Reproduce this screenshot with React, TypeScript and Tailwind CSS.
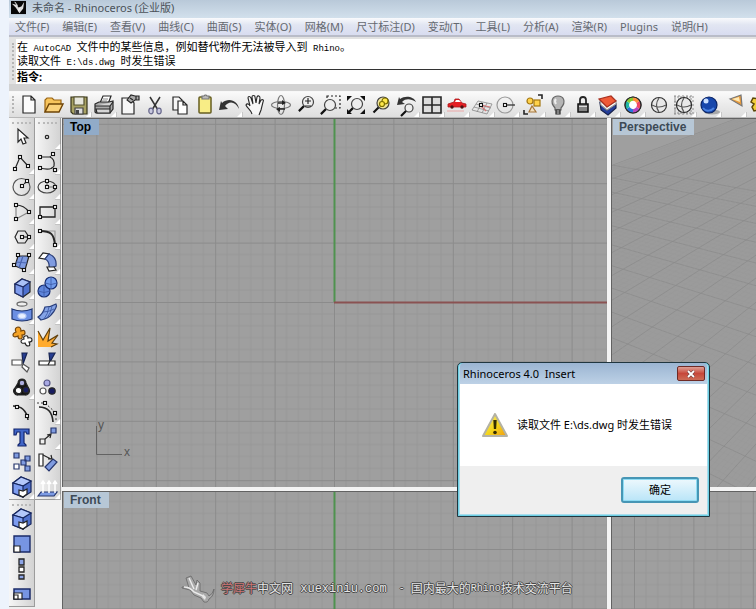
import React from "react";

const INK = "#262626";
const BLUE = "#7f9be0";

function Icon({ children, fly = false }: { children: React.ReactNode; fly?: boolean }) {
  return (
    <svg viewBox="0 0 26 26" className="h-[26px] w-[26px] shrink-0" fill="none" stroke={INK} strokeWidth="1.2" aria-hidden="true">
      {children}
      {fly && <path d="M25 20v5h-5z" fill="#fff" stroke="none" />}
      {fly && <path d="M25.5 20v5.5H20" stroke="#b5b5b5" strokeWidth="0.6" />}
    </svg>
  );
}

function Dots({ at }: { at: [number, number][] }) {
  return (
    <>
      {at.map(([x, y]) => (
        <rect key={`${x}-${y}`} x={x - 1.5} y={y - 1.5} width="3" height="3" fill="#fff" stroke="#111" strokeWidth="1.1" />
      ))}
    </>
  );
}

const Lens = ({ x, y, r, fill = "#eee" }: { x: number; y: number; r: number; fill?: string }) => (
  <>
    <circle cx={x} cy={y} r={r} fill={fill} stroke="#444" />
    <path d={`M${x - r * 0.75} ${y + r * 0.75}L${x - r * 0.75 - 5} ${y + r * 0.75 + 5}`} stroke="#111" strokeWidth="2.2" />
  </>
);

const Cube = () => (
  <>
    <path d="M6 10l7-5 8 3v10l-7 5-8-4z" fill="#4d70cf" />
    <path d="M6 10l7-5 8 3-7 5z" fill="#a9c0f7" stroke="#1e2c66" />
    <path d="M6 10l8 3v10l-8-4z" fill="#7f9cec" stroke="#1e2c66" />
  </>
);

const CubeView = () => (
  <>
    <path d="M4 9l8-6 10 4v11l-8 5-10-4z" fill="#4f70cc" stroke="#16265e" />
    <path d="M4 9l8-6 10 4-8 5z" fill="#b4c8fa" stroke="#16265e" />
    <path d="M4 9l10 3v11L4 19z" fill="#7d9cf0" stroke="#16265e" />
    <path d="M10 16l4 1 4-2v5l-4 3-4-2z" fill="#fff" stroke="#222" />
  </>
);

type Tool = [string, React.ReactNode, boolean?];

const mainTools: Tool[] = [
  ["新建", <path d="M7 4h8l4 4v13H7zM15 4v4h4" fill="#fcfcfc" />],
  ["打开", <><path d="M4 20V8l2-2h5l2 2h7v4" fill="#f7c45c" stroke="#9a6412" /><path d="M4 20l4-8h14l-4 8z" fill="#fbd27b" stroke="#6e4407" strokeWidth="1.4" /></>],
  ["保存", <><path d="M5 5h16v17H7l-2-2z" fill="#a8a264" stroke="#35331a" /><path d="M8 5h10v8H8z" fill="#e6e6dc" stroke="#55522f" /><path d="M9 16h8v6H9z" fill="#ddd" stroke="#444" /><path d="M10 18h3v4h-3z" fill="#444" stroke="none" /></>, true],
  ["打印", <><path d="M9 11l3-7h8l-3 8" fill="#fff" /><path d="M4 12l4-2h10l4-1v8l-3 4H5l-1-1z" fill="#aaa" /><path d="M4 14h15l3-4M5 17h14v4H6zM19 14v7" fill="#d5d5d5" /><path d="M12 7h5M11 9h5" stroke="#888" /></>, true],
  ["属性", <><path d="M6 6h8l4 5v11H6z" fill="#f6f6f6" /><path d="M11 8l4-5 4 1h4v4h-4l-4 3z" fill="#aaa" /><path d="M20 4v4M14 6l3 2" /></>],
  ["剪切", <><path d="M8 5l8 13M18 5l-8 13" strokeWidth="1.5" stroke="#333" /><ellipse cx="9" cy="19" rx="2.2" ry="2.8" fill="#c8c8df" stroke="#66668a" /><ellipse cx="17" cy="19" rx="2.2" ry="2.8" fill="#c8c8df" stroke="#66668a" /></>],
  ["复制", <><path d="M6 5h6l3 3v10H6z" fill="#f6f6f6" /><path d="M11 9h5l4 4v9h-9zM16 9v4h4" fill="#fff" /></>],
  ["粘贴", <><rect x="7" y="5" width="12" height="16" rx="1" fill="#f8ed86" stroke="#655d21" strokeWidth="1.5" /><path d="M10 7V4h2l1-1h1l1 1h2v3z" fill="#bbb" stroke="#777" /></>],
  ["撤销", <path d="M8 14c4-5 10-5 14 3-1-8-10-12-17-6l-1-2-2 9 9-1z" fill="#333" stroke="none" />, true],
  ["平移", <path d="M10 22c-1-4-5-6-6-9 1-2 3-1 4 1L6 6c0-2 2-2 3 0l2 6-1-7c0-2 3-2 3 0l1 6 1-6c1-2 3-1 3 1l-1 6 2-4c2-1 3 0 2 2l-2 8-2 5" fill="#f7f7f7" strokeWidth="1.1" />],
  ["旋转视图", <><ellipse cx="13" cy="13" rx="9.500" ry="3.500" stroke="#777" /><ellipse cx="13" cy="13" rx="3.500" ry="9.500" stroke="#777" /><path d="M14 8l4 3-4 2zM12 15l-4 2 4 3z" fill="#222" stroke="none" /><path d="M10 11h5M11 17h6" strokeWidth="1.700" /></>],
  ["缩放", <><Lens x={15} y={10} r={5.5} /><path d="M12 9h6M15 6v6M12 14h6" /></>],
  ["框选缩放", <><path d="M9 4h13v12H9z" strokeDasharray="2 2" /><Lens x={12} y={13} r={5.5} /></>],
  ["缩放至范围", <><Lens x={14} y={12} r={5.5} /><path d="M4 4h5L4 9zM22 4h-5l5 5zM4 22h5l-5-5zM22 22h-5l5-5z" fill="#111" stroke="none" /></>],
  ["缩放选取", <><Lens x={15} y={11} r={6} fill="#f2e698" /><circle cx="17" cy="9" r="3" fill="#ffe94c" stroke="#7c6e00" /><circle cx="14" cy="12" r="2.500" fill="#ffe94c" stroke="#7c6e00" /></>],
  ["上一视图", <><Lens x={15} y={16} r={4} /><path d="M8 10c4-4 9-3 14 0C20 5 12 3 6 7L5 5 3 13l8-1z" fill="#333" stroke="none" /></>, true],
  ["四视图", <path d="M4 5h18v16H4zM13 5v16M4 13h18" strokeWidth="1.6" fill="#ddd" />, true],
  ["着色车", <><path d="M4 15v-3l6-2 1-3h4l3 4 4 1v3z" fill="#e51f24" stroke="#a9191c" strokeWidth="0.8" /><path d="M11 10l1-2h3l2 2z" fill="#fff" stroke="none" /><circle cx="8" cy="15" r="1.700" fill="#4c1111" stroke="none" /><circle cx="18" cy="15" r="1.700" fill="#4c1111" stroke="none" /><path d="M3 19h17" stroke="#e9b1b1" /></>, true],
  ["工作平面", <><path d="M3 18l6-9 14 3-5 10zM5 15l15 4M7 12l15 4M13 10l-5 10M18 11l-5 10" stroke="#888" strokeWidth="0.8" /><path d="M12 13l9 2M12 14l5 5" stroke="#d67676" /><Dots at={[[12, 13]]} /></>, true],
  ["物件锁点", <><circle cx="11" cy="13" r="8" stroke="#999" /><path d="M12 13h9" /><Dots at={[[11, 13]]} /></>, true],
  ["选取", <><path d="M18 3h4v4M8 22H4v-4" strokeWidth="1.6" /><circle cx="10" cy="9" r="3" fill="#ffd24b" stroke="#a47711" /><rect x="14" y="8" width="6" height="6" fill="#ffd24b" stroke="#a47711" /><path d="M12 14l4 6H9z" fill="#f3dfbd" stroke="#a6763a" /></>, true],
  ["隐藏", <><path d="M10 16C4 9 8 4 13 4s9 5 3 12v2h-6z" fill="#b5b5b5" stroke="#666" /><path d="M11 18h4v4h-4zM11 20h4" fill="#ddd" /><path d="M11 7q-2 2 0 5" stroke="#eee" strokeWidth="2" /></>, true],
  ["锁定", <><path d="M10 12V8c0-4 6-4 6 0v4" strokeWidth="1.8" /><rect x="8" y="12" width="10" height="8" fill="#858585" stroke="#111" strokeWidth="1.5" /><path d="M9 14h8v1H9z" fill="#ddd" stroke="none" /></>, true],
  ["图层", <><path d="M5 11l7 7 9-6v4l-8 7-7-5z" fill="#243e9a" stroke="#17214a" /><path d="M5 8l7 7 9-6v3l-9 6-6-5z" fill="#fff" stroke="#999" /><path d="M4 7l12-3 5 5-9 6z" fill="#f05a37" stroke="#a9301f" /></>, true],
  ["材质", <><circle cx="13" cy="13" r="8" fill="#fff" stroke="#333" /><g strokeWidth="3.600"><path d="M13 7a6 6 0 0 1 5 3" stroke="#ff913d" /><path d="M18 10a6 6 0 0 1 0 6" stroke="#f14664" /><path d="M18 16a6 6 0 0 1-5 3" stroke="#b447c1" /><path d="M13 19a6 6 0 0 1-5-3" stroke="#2874da" /><path d="M8 16a6 6 0 0 1 0-6" stroke="#1fb7a5" /><path d="M8 10a6 6 0 0 1 5-3" stroke="#8acc31" /></g><circle cx="13" cy="13" r="8" /></>, true],
  ["着色", <><circle cx="13" cy="13" r="7.500" fill="#e8e8e8" stroke="#333" /><path d="M13 6q-5 7 0 14M6 13q7 4 14 0" stroke="#555" /></>],
  ["渲染网格", <><path d="M4 3v20M8 3v20M12 3v20M16 3v20M20 3v20M3 5h20M3 9h20M3 13h20M3 17h20M3 21h20" stroke="#777" strokeWidth="0.8" strokeDasharray="2 1" /><circle cx="13" cy="13" r="7.500" fill="#e8e8e8" /><path d="M13 6q-5 7 0 14M6 13q7 4 14 0" stroke="#555" /></>, true],
  ["渲染", <><ellipse cx="16" cy="20" rx="8" ry="2.500" fill="#a9a9a9" stroke="none" /><circle cx="13" cy="13" r="8" fill="#1747ac" stroke="#0b2464" /><circle cx="10" cy="9" r="2.500" fill="#cbe0ff" stroke="none" /><path d="M7 16c3 4 8 3 11 0" stroke="#4b82e2" strokeWidth="2" /></>, true],
  ["灯光", <><path d="M9 7l11-4 1 11z" fill="#e89a3c" stroke="#777" /><path d="M11 7l7-2 1 5z" fill="#ffe9b3" stroke="none" /></>, true],
  ["选项", <path d="M11 4h4v3l4-1 2 4-3 2 3 3-2 4-4-1v3h-4v-3l-4 1-2-4 2-3-3-2 2-4 5 1z" fill="#f1cd39" stroke="#5b4606" strokeWidth="1.5" />],
];

const leftTools: Tool[] = [
  ["选取物件", <path d="M9 5v13l3-3 2 5 3-1-2-5h4z" fill="#fff" />],
  ["多重直线", <><path d="M6 20L11 8l8 9" /><Dots at={[[6, 20], [11, 8], [19, 17]]} /></>, true],
  ["圆", <><circle cx="12.500" cy="13" r="8.500" stroke="#555" /><path d="M13 12l5-5" strokeDasharray="2 1" /><Dots at={[[13, 12], [18, 7]]} /></>, true],
  ["圆弧", <><path d="M7 6q8 0 13 7" /><path d="M20 13L7 20V7" stroke="#888" /><Dots at={[[7, 6], [20, 13], [7, 20]]} /></>, true],
  ["多边形", <><path d="M6 13l3-6h7l4 6-4 6H9z" /><path d="M13 13h7" /><Dots at={[[13, 13], [20, 13]]} /></>, true],
  ["曲面", <><path d="M6 17L9 7h11l-4 14z" fill={BLUE} /><path d="M7 13l11 1M14 7l-4 12" stroke="#4863ae" /><Dots at={[[9, 6], [20, 6], [5, 16], [15, 21]]} /></>, true],
  ["立方体", <Cube />, true],
  ["圆管", <><ellipse cx="13" cy="5" rx="5" ry="2.200" fill="#eee" stroke="#666" /><path d="M3 10q10 4 20 0v10q-10 4-20 0z" fill="#6b8fe3" stroke="#1c326c" /><ellipse cx="13" cy="17" rx="4" ry="2.500" fill="#eaf1ff" stroke="#b9ccf5" /></>, true],
  ["布尔运算", <><path d="M9 3q3 0 3 4 4-2 4 2 0 2-3 2 1 4-2 4-2 0-2-3-5 2-5-1 0-2 3-3-2-4 2-5z" fill="#f5a326" stroke="#76460a" /><path d="M16 12q3-1 3 2 4-1 4 2 0 2-3 2 2 4-1 4-2 0-3-3-4 1-4-2 0-1 3-2-1-2 1-3z" fill="#fff" /></>],
  ["修剪", <><path d="M13 4h5l-4 11z" fill="#263d91" stroke="#162453" /><path d="M3 11h10v5H3z" fill="#fff" stroke="#555" /><path d="M14 15l6 4-2 4-5-5z" fill="#fff" stroke="#555" /></>],
  ["群组", <><path d="M13 5a4 4 0 0 1 4 4l3 6a4 4 0 0 1-4 6H9a4 4 0 0 1-3-7l3-5a4 4 0 0 1 4-4z" fill="#111" /><circle cx="13" cy="9" r="2.800" fill="#acaddf" /><circle cx="9.500" cy="16.500" r="3.200" fill="#fff" /><circle cx="17" cy="16" r="3" fill="#171c60" /></>, true],
  ["编辑点", <><path d="M4 7q13 0 15 14" strokeWidth="1.6" /><Dots at={[[8, 8], [18, 17]]} /></>],
  ["文字", <path d="M5 5h15v5h-2l-1-2h-2v11l2 2v1H9v-1l2-2V8H8l-1 3H5z" fill="#4166c8" stroke="#14266d" />],
  ["阵列", <g fill={BLUE} stroke="#26366d"><path d="M5 4h5v5H5zM16 7h5v5h-5zM12 11h5v5h-5zM16 17h5v5h-5z" /><path d="M5 15h5v5H5z" fill="#fff" /></g>],
  ["视图", <CubeView />, true],
];

const rightTools: Tool[] = [
  ["点", <circle cx="12" cy="13" r="1.700" />, true],
  ["控制点曲线", <><path d="M5 8h10q5 2 4 9-3 5-14 2" /><path d="M15 8l3-3M16 19l5 2" strokeDasharray="1 1" /><Dots at={[[5, 8], [18, 5], [5, 19], [20, 21]]} /></>, true],
  ["椭圆", <><ellipse cx="12" cy="13" rx="9" ry="6" stroke="#444" /><path d="M12 13V7M12 13h9" stroke="#666" /><Dots at={[[12, 7], [12, 13], [20, 13]]} /></>, true],
  ["矩形", <><path d="M5 8h15v10H5z" strokeWidth="1.3" /><Dots at={[[20, 8], [5, 18]]} /></>, true],
  ["圆角", <><path d="M5 7h15v14" stroke="#999" /><path d="M5 7c11 0 14 3 15 14" strokeWidth="2" /><Dots at={[[5, 7], [20, 21]]} /></>, true],
  ["曲面圆角", <><path d="M4 9l4-5 6 1-4 5z" fill="#fff" /><path d="M14 5q8 3 7 12l-7 3q1-8-4-10z" fill={BLUE} stroke="#293e7a" /><path d="M12 18l7 0 2 3-7 1z" fill="#fff" /></>, true],
  ["球体", <><circle cx="9" cy="17" r="6" fill="#5f86db" stroke="#172e71" /><circle cx="16" cy="9" r="6" fill="#719cec" stroke="#172e71" /><path d="M16 3v12M10 9q6 3 12 0M9 11v12M3 17q6 3 12 0" stroke="#3b58a5" strokeWidth="0.8" /></>, true],
  ["嵌面", <><path d="M3 18q5-3 7-10 6 0 11-3 2 3-5 11-2 3-10 5z" fill="#84a3e6" stroke="#293e7a" /><path d="M8 13q6 0 11-3M14 8q-1 7-5 12M17 7q-1 7-5 12" stroke="#38549f" strokeWidth="0.8" /></>, true],
  ["炸开", <><path d="M3 23V7l5 9 7-12-2 13 10-6-6 8 5 1-6 3z" fill="#ffab2e" stroke="none" /><path d="M3 7l5 9 7-12-2 13 10-6-6 8 5 1-6 3" stroke="#5f400f" /></>],
  ["分割", <><path d="M14 4h6l-5 9z" fill="#263d91" stroke="#162453" /><path d="M4 12h16v4H4z" fill="#fff" /><path d="M15 12l-2 4" /></>],
  ["解散群组", <><circle cx="12" cy="9" r="3" fill="#a8a9e3" stroke="#555685" /><circle cx="8" cy="17" r="3" fill="#fff" stroke="#555" /><circle cx="17" cy="17" r="3.200" fill="#171c60" /></>],
  ["控制点", <><path d="M4 8q13 0 14 15" strokeWidth="1.7" /><path d="M2 4h8l11 10v8" strokeDasharray="2 2" strokeWidth="0.9" /><Dots at={[[10, 4], [20, 14]]} /></>, true],
  ["移动", <><path d="M5 15h5v5H5z" fill="#eee" /><path d="M16 4h5v5h-5z" fill={BLUE} stroke="#26366d" /><path d="M10 15l6-5M12 11l4-1-1 4" /></>, true],
  ["旋转", <><path d="M4 5h4v12H4z" fill="#fff" /><path d="M10 18l8-8 4 3-8 9z" fill={BLUE} stroke="#26366d" /><path d="M8 6l8 4M13 10h4l-1-4" /></>],
  ["挤出", <><path d="M3 22l3-4h16l-3 4z" fill="#7c9be5" stroke="#26366d" /><path d="M8 19V8M6 10l2-3 2 3M14 19V8M12 10l2-3 2 3M20 19V8M18 10l2-3 2 3" stroke="#fff" strokeWidth="1.500" /></>, true],
];

const viewTools: Tool[] = [
  ["立体视图", <CubeView />],
  ["最大化", <><path d="M5 5h16v16H5z" fill="#7795e3" stroke="#1b2b68" strokeWidth="1.400" /><path d="M5 15h6v6H5z" fill="#fff" /></>],
  ["垂直排列", <g strokeWidth="1.300"><path d="M10 3h5v6h-5z" fill="#8ca4e7" /><path d="M10 11h5v5h-5z" fill="#fff" /><path d="M10 19h5v4h-5z" fill="#8ca4e7" /></g>],
  ["水平排列", <><path d="M5 8h16v10H5z" fill="#7795e3" stroke="#1b2b68" strokeWidth="1.500" /><path d="M5 12h8v6H5z" fill="#fff" /><path d="M5 14h4v4H5z" fill="#fff" /></>],
];

const menus = ["文件(F)", "编辑(E)", "查看(V)", "曲线(C)", "曲面(S)", "实体(O)", "网格(M)", "尺寸标注(D)", "变动(T)", "工具(L)", "分析(A)", "渲染(R)", "Plugins", "说明(H)"];

function ToolColumn({ tools }: { tools: Tool[] }) {
  return (
    <div className="flex w-[26px] flex-col border-r border-b border-[#9c9c9c] bg-linear-to-r from-[#f6f6f6] to-[#d3d3d3] pt-1">
      <div className="mx-[3px] h-[2px] border-t-2 border-dotted border-[#b9b9b9]" />
      {tools.map(([name, art, fly]) => (
        <button key={name} aria-label={name} className="flex h-[25px] w-full items-center justify-center">
          <Icon fly={fly}>{art}</Icon>
        </button>
      ))}
    </div>
  );
}

const CELL = 59.4;

function PlanGrid({ id, x, y, xAxis }: { id: string; x: number; y: number; xAxis?: boolean }) {
  const minor = [1, 2, 3, 4].map((n) => (n * CELL) / 5);
  return (
    <svg className="absolute inset-0 h-full w-full" aria-hidden="true">
      <defs>
        <pattern id={id} x={x} y={y} width={CELL} height={CELL} patternUnits="userSpaceOnUse">
          {minor.map((m) => (
            <path key={m} d={`M${m} 0V60M0 ${m}H60`} stroke="#959595" strokeWidth="0.8" />
          ))}
          <path d="M0.500 0V60M0 0.500H60" stroke="#8b8b8b" />
        </pattern>
      </defs>
      <rect width="100%" height="100%" fill={`url(#${id})`} />
      {id !== "right-grid" && <path d={`M${x + 0.5} 0V${xAxis ? y : 900}`} stroke="#4f924f" strokeWidth="2" />}
      {xAxis && <path d={`M${x} ${y + 0.5}H2000`} stroke="#8a5252" strokeWidth="2" />}
    </svg>
  );
}

function PerspectiveGrid() {
  const lines: React.ReactNode[] = [];
  for (let i = 0; i < 150; i++) {
    const t = i / 5;
    const a = 46 + 12 * t + 0.8 * t * t;
    const b = 46 + 13 * t + 0.9 * t * t;
    const major = i % 5 === 0;
    const stroke = major ? "#8b8b8b" : "#999";
    const w = major ? 0.8 : 0.5;
    lines.push(<line key={`a${i}`} x1="-800" y1="-100" x2="800" y2={2 * a + 100} stroke={stroke} strokeWidth={w} />);
    lines.push(<line key={`b${i}`} x1="0" y1={b} x2="600" y2="-180" stroke={stroke} strokeWidth={w} />);
  }
  return (
    <svg className="absolute inset-0 h-full w-full" aria-hidden="true">
      <defs>
        <clipPath id="ground">
          <path d="M0 46L122 0H900V900H0z" />
        </clipPath>
      </defs>
      <path d="M0 46L122 0H900V900H0z" fill="#9b9b9b" />
      <g clipPath="url(#ground)">{lines}</g>
    </svg>
  );
}

function Viewport({ title, active, children }: { title?: string; active?: boolean; children: React.ReactNode }) {
  return (
    <section className="relative overflow-hidden border-t border-l border-[#626262] bg-[#9f9f9f]">
      {children}
      {title && (
        <h2 className={`relative ml-px w-fit pr-2 pl-1.5 text-xs leading-4 font-bold ${active ? "bg-[#91abc8] text-black" : "bg-[#b7c7d6] text-[#3d4a56]"}`}>
          {title}
        </h2>
      )}
    </section>
  );
}

const Mono = ({ children }: { children: React.ReactNode }) => (
  <span className="font-['Liberation_Mono',monospace] text-[9px] whitespace-pre">{children}</span>
);

function ErrorDialog() {
  return (
    <div role="dialog" aria-labelledby="dialog-title" className="absolute top-[362px] left-[457px] w-[253px] rounded-t-[5px] border border-[#20363f] bg-[#a9dcec] px-0.5 pb-0.5 text-black shadow-[inset_0_0_0_1px_#6dd0e4]">
      <div className="flex h-[21px] items-center justify-between rounded-t bg-linear-to-b from-[#9bb5d2] to-[#bdd1e6] pl-[3px]">
        <h1 id="dialog-title" className="text-[11px] leading-5 whitespace-pre">Rhinoceros 4.0  Insert</h1>
        <button aria-label="关闭" className="mr-0.5 flex h-[15px] w-7 items-center justify-center rounded-[2px] border border-[#6f2a25] bg-linear-to-b from-[#dd9f96] via-[#c7473a] via-50% to-[#cc6b55]">
          <svg viewBox="0 0 10 8" className="h-2 w-2.5" aria-hidden="true">
            <path d="M2 1l6 6M8 1L2 7" stroke="#693c3c" strokeWidth="3" />
            <path d="M2 1l6 6M8 1L2 7" stroke="#fff" strokeWidth="1.800" />
          </svg>
        </button>
      </div>
      <div className="flex h-[82px] items-center gap-2 bg-white pl-[21px]">
        <svg viewBox="0 0 28 26" className="h-[26px] w-7" aria-hidden="true">
          <defs>
            <linearGradient id="warning" x2="1" y2="1">
              <stop stopColor="#fff37a" />
              <stop offset=".55" stopColor="#f4d51b" />
              <stop offset="1" stopColor="#f09b12" />
            </linearGradient>
          </defs>
          <path d="M14 2L2 24h24z" fill="url(#warning)" stroke="#b4b2a4" strokeWidth="2" strokeLinejoin="round" />
          <path d="M12.300 8h3.400l-.6 9h-2.200z" fill="#332c00" />
          <circle cx="14" cy="20.500" r="1.800" fill="#332c00" />
        </svg>
        <p className="text-[11px] leading-4">读取文件 E:\ds.dwg 时发生错误</p>
      </div>
      <div className="flex h-12 items-center justify-end bg-[#efefef] pr-2">
        <button className="h-[26px] w-[78px] rounded-[3px] border-2 border-[#4796b5] bg-linear-to-b from-[#edf8fd] to-[#b9e5f8] text-[11px] leading-5 shadow-[inset_0_0_0_1px_#8edcf4]">
          确定
        </button>
      </div>
    </div>
  );
}

function Watermark() {
  return (
    <div className="absolute bottom-[6px] left-[181px] flex items-center text-xs leading-7 whitespace-pre text-[#e5e5e5] [text-shadow:1px_0_#484848,-1px_0_#484848,0_1px_#484848,0_-1px_#484848]">
      <svg viewBox="0 0 36 28" className="mr-1 h-7 w-9" aria-hidden="true">
        <path d="M1 12q5-1 7 1L5 3l5-2 5 9 1-5 3 3v8l7 2 2 3q4-2 5-7 0 7-5 10-1 4-5 3l-3-4-7-3-4-5-8-2z" fill="#a9a9a9" stroke="#666" strokeWidth="0.8" />
        <path d="M3 12q6 0 10 5l9 4M8 3l5 11M17 8l-2 7" fill="none" stroke="#ececec" strokeWidth="1.400" />
        <path d="M22 19l3 3-1 3-3-3z" fill="#e7e7e7" />
      </svg>
      <span className="text-[#cb7474]">学犀牛</span>
      <span>中文网</span>
      <span className="font-['Liberation_Mono',monospace]">{" xuexiniu.com"}</span>
      <span className="font-['Liberation_Mono',monospace] text-[10px]">{"  - "}</span>
      <span>国内最大的</span>
      <span className="font-['Liberation_Mono',monospace] text-[10px]">Rhino</span>
      <span>技术交流平台</span>
    </div>
  );
}

export default function App() {
  return (
    <div className="relative flex h-screen flex-col overflow-hidden bg-[#edf3fc] pl-[9px] font-['Noto_Sans','Noto_Sans_CJK_SC',sans-serif]">
      <header className="flex h-[18px] shrink-0 items-center gap-1.5 bg-linear-to-b from-[#b9c9d9] to-[#d2e0ec] pb-0.5 text-[11px] leading-4 text-[#4b5259]">
        <svg viewBox="0 0 16 14" className="ml-0.5 h-[15px] w-[15px] self-start" aria-hidden="true">
          <path d="M0 0h16v14H0z" fill="#080808" />
          <path d="M1 3l5 1 2 3 3-1 3-5-1 7-4 5-2-3-2-3z" fill="#ddd" />
          <path d="M4 1l3 4M9 8l-1 3" stroke="#fff" />
        </svg>
        未命名 - Rhinoceros (企业版)
      </header>
      <nav className="flex h-[19px] shrink-0 items-center gap-[13px] border-b-2 border-[#b9bcc8] bg-linear-to-b from-[#f9fafc] via-[#e2e6f2] via-40% to-[#d8dcf0] pl-1.5 text-[11px] leading-4 text-[#656970]">
        {menus.map((m) => (
          <button key={m} className="shrink-0">{m}</button>
        ))}
      </nav>
      <div className="flex h-[47px] shrink-0 bg-[#e2e2e2] pt-0.5">
        <div className="my-1 mr-0.5 ml-[3px] w-0.5 border-l-2 border-dotted border-[#b5b5b5]" />
        <div className="min-w-0 flex-1 bg-white pl-px text-[11px] text-black">
          <div className="h-[31px] border-b border-[#333]">
            <p className="h-[15px] leading-4">在<Mono> AutoCAD </Mono>文件中的某些信息，例如替代物件无法被导入到<Mono> Rhino</Mono>。</p>
            <p className="h-[15px] leading-[14px]">读取文件<Mono> E:\ds.dwg </Mono>时发生错误</p>
          </div>
          <div className="flex h-[13px] items-center leading-3">
            <label htmlFor="command" className="font-bold">指令:</label>
            <input id="command" className="h-3 flex-1 bg-transparent pl-1 outline-none" />
          </div>
        </div>
      </div>
      <div className="h-[7px] shrink-0 bg-[#d2d2d2]" />
      <div className="flex h-[27px] shrink-0 overflow-hidden border-y border-t-[#f7f7f7] border-b-[#b8b8b8] bg-linear-to-b from-[#fafafa] via-[#ebebeb] via-50% to-[#dedede]">
        <div className="my-1 ml-[3px] w-0.5 shrink-0 border-l-2 border-dotted border-[#b5b5b5]" />
        <div role="toolbar" className="-mr-4 ml-0.5 flex min-w-0 flex-1 items-center">
          {mainTools.map(([name, art, fly]) => (
            <button key={name} aria-label={name} className="flex min-w-0 flex-1 justify-center">
              <Icon fly={fly}>{art}</Icon>
            </button>
          ))}
        </div>
      </div>
      <main className="flex min-h-0 flex-1">
        <div className="flex w-[53px] shrink-0 items-start bg-[#efefef]">
          <div>
            <ToolColumn tools={leftTools} />
            <ToolColumn tools={viewTools} />
          </div>
          <ToolColumn tools={rightTools} />
        </div>
        <div className="grid min-w-0 flex-1 grid-cols-[545fr_145fr] grid-rows-[369fr_118fr] gap-1 bg-[#f4f4f4] font-['Liberation_Sans',sans-serif]">
          <Viewport title="Top" active>
            <PlanGrid id="top-grid" x={271} y={183} xAxis />
            <svg className="absolute bottom-6 left-[33px] h-14 w-14" aria-hidden="true">
              <path d="M0.500 19v28.500H26" fill="none" stroke="#626262" />
              <text x="2" y="22" fontSize="12" fill="#555">y</text>
              <text x="28" y="49" fontSize="12" fill="#555">x</text>
            </svg>
          </Viewport>
          <Viewport title="Perspective"><PerspectiveGrid /></Viewport>
          <Viewport title="Front"><PlanGrid id="front-grid" x={271} y={57} /></Viewport>
          <Viewport><PlanGrid id="right-grid" x={22} y={57} /></Viewport>
        </div>
      </main>
      <Watermark />
      <ErrorDialog />
    </div>
  );
}
